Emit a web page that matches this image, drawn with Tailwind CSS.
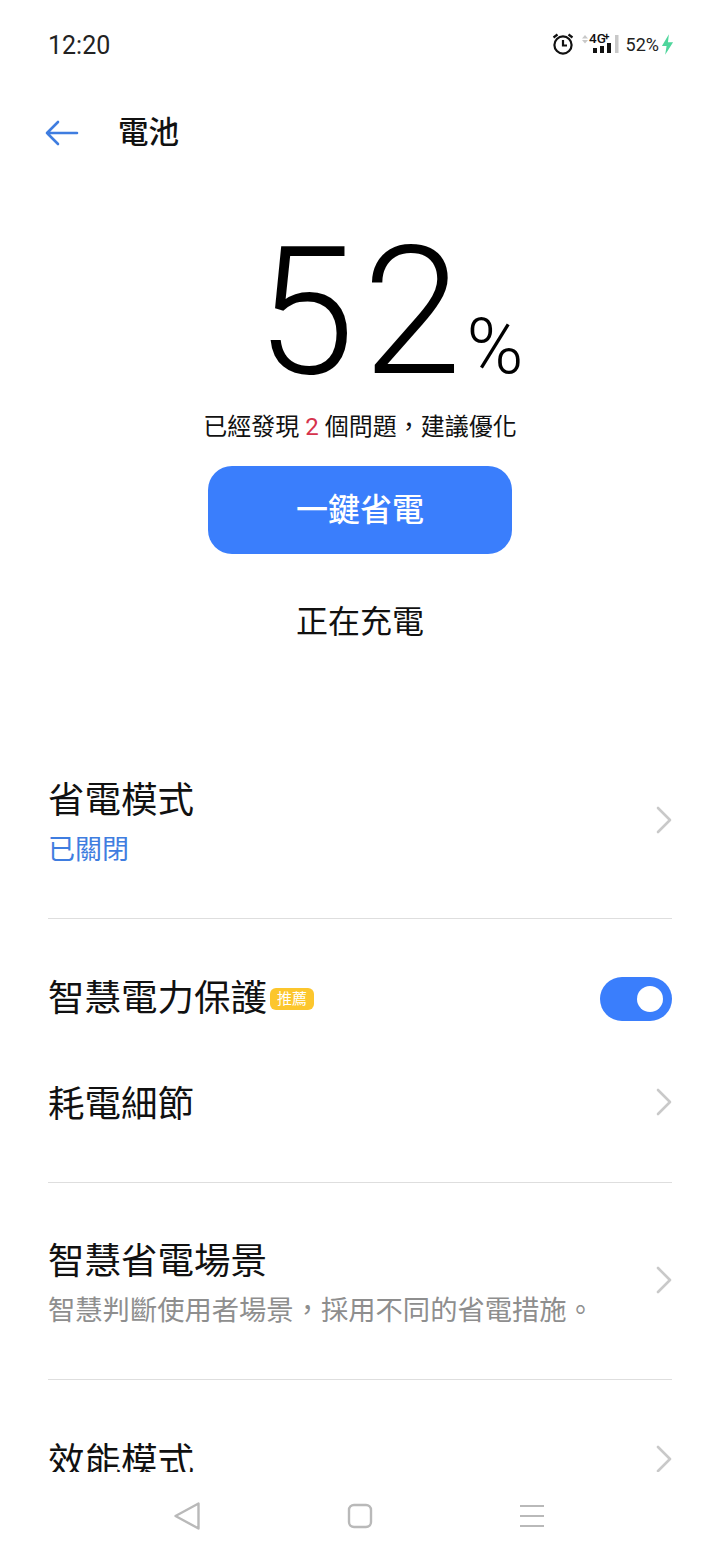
<!DOCTYPE html>
<html lang="zh-Hant">
<head>
<meta charset="utf-8"/>
<meta content="width=device-width, initial-scale=1.0" name="viewport"/>
<title>電池</title>
<script src="https://cdn.jsdelivr.net/npm/@tailwindcss/browser@4"></script>
</head>
<body class="bg-white text-black font-['Roboto','Noto_Sans_CJK_TC',sans-serif]">
<div class="w-[720px] h-[1560px] flex flex-col overflow-hidden bg-white">

  <!-- status bar -->
  <div class="h-[88px] shrink-0 flex items-center justify-between pl-[48px] pr-[46px]">
    <span class="text-[25px] text-[#222] pt-[4px]">12:20</span>
    <div class="flex items-center">
      <svg width="24" height="24" viewBox="0 0 24 24" fill="none" stroke="#111" stroke-width="2.2" class="mr-[7px]">
        <circle cx="12" cy="13" r="8.6"/>
        <path d="M12 8v5.5h4M2.5 5.5l4-3M21.500 5.500l-4-3"/>
      </svg>
      <svg width="37" height="24" viewBox="0 -2 37 24" class="mr-[7px]">
        <path d="M0 4.500l3-3.500 3 3.500zM0 6l3 3.500 3-3.500z" fill="#c8c8c8"/>
        <rect x="11" y="14" width="4" height="5" fill="#111"/>
        <rect x="18" y="12" width="4" height="7" fill="#111"/>
        <rect x="25" y="9" width="4" height="10" fill="#111"/>
        <rect x="33" y="1" width="3.500" height="18" fill="#c8c8c8"/>
        <text x="7" y="9" font-size="13.500" font-weight="500" fill="#111" font-family="Roboto">4G</text>
        <text x="22" y="6" font-size="10" font-weight="700" fill="#111" font-family="Roboto">+</text>
      </svg>
      <span class="text-[18px] text-[#222]">52%</span>
      <svg width="13" height="21" viewBox="0 0 14 22" class="ml-[2px]">
        <path d="M8.500 0L1 12.500h5L4.500 22 13 8.500H7.500z" fill="#4fd69c"/>
      </svg>
    </div>
  </div>

  <!-- header -->
  <div class="h-[90px] shrink-0 flex items-center pl-[45px]">
    <svg width="34" height="26" viewBox="0 0 34 26" fill="none" stroke="#3f7de0" stroke-width="2.600" stroke-linecap="round" stroke-linejoin="round">
      <path d="M32 13H2M13 2L2 13l11 11"/>
    </svg>
    <span class="ml-[39px] text-[30.500px] leading-[40px] font-medium text-[#111]">電池</span>
  </div>

  <!-- battery level -->
  <div class="h-[232px] shrink-0 flex items-end pl-[256px]">
    <span class="text-[178px] leading-[178px] font-light tracking-[8px] mb-[9px]">52</span>
    <span class="text-[77px] leading-[77px] font-light mb-[24px] ml-[-3px]">%</span>
  </div>
  <p class="mt-[-3px] h-[40px] shrink-0 text-center text-[24px] leading-[40px] text-[#111]">已經發現 <span class="text-[#d6334c]">2</span> 個問題，建議優化</p>
  <div class="mt-[19px] flex justify-center shrink-0">
    <button class="w-[304px] h-[88px] rounded-[24px] bg-[#3a7efc] text-white text-[32px] font-medium">一鍵省電</button>
  </div>
  <p class="mt-[46px] h-[44px] shrink-0 text-center text-[32px] leading-[44px] text-[#111]">正在充電</p>

  <!-- settings list -->
  <div class="flex-1 min-h-0 overflow-hidden mt-[79px] mx-[48px]">
    <div class="h-[196px] flex items-center justify-between border-b border-[#dedede]">
      <div class="pt-[11px]">
        <div class="text-[36.500px] leading-[48px] text-[#111]">省電模式</div>
        <div class="text-[27px] leading-[50px] text-[#3f7de0]">已關閉</div>
      </div>
      <svg width="16" height="28" viewBox="0 0 16 28" fill="none" stroke="#c9c9c9" stroke-width="2.600" stroke-linecap="round" stroke-linejoin="round" class="mb-[2px]"><path d="M2 2l12 12L2 26"/></svg>
    </div>
    <div class="pt-[27px] pb-[26px] border-b border-[#dedede]">
      <div class="h-[105px] flex items-center justify-between">
        <div class="flex items-center">
          <span class="text-[36.500px] leading-[48px] text-[#111]">智慧電力保護</span>
          <span class="ml-[3px] w-[44px] h-[22px] rounded-[6px] bg-[#fcc62d] text-white text-[15px] leading-[22px] text-center">推薦</span>
        </div>
        <div class="relative w-[72px] h-[44px] rounded-full bg-[#3a7efc]">
          <div class="absolute right-[9px] top-[9px] w-[26px] h-[26px] rounded-full bg-white"></div>
        </div>
      </div>
      <div class="h-[105px] flex items-center justify-between">
        <span class="text-[36.500px] leading-[48px] text-[#111] pt-[3px]">耗電細節</span>
        <svg width="16" height="28" viewBox="0 0 16 28" fill="none" stroke="#c9c9c9" stroke-width="2.600" stroke-linecap="round" stroke-linejoin="round" class="mb-[4px]"><path d="M2 2l12 12L2 26"/></svg>
      </div>
    </div>
    <div class="h-[197px] flex items-center justify-between border-b border-[#dedede]">
      <div class="pt-[11px]">
        <div class="text-[36.500px] leading-[48px] text-[#111]">智慧省電場景</div>
        <div class="text-[27.300px] leading-[50px] text-[#8e8e8e]">智慧判斷使用者場景，採用不同的省電措施。</div>
      </div>
      <svg width="16" height="28" viewBox="0 0 16 28" fill="none" stroke="#c9c9c9" stroke-width="2.600" stroke-linecap="round" stroke-linejoin="round" class="mb-[2px]"><path d="M2 2l12 12L2 26"/></svg>
    </div>
    <div class="h-[158px] flex items-center justify-between">
      <span class="text-[36.500px] leading-[48px] text-[#111] pt-[5px]">效能模式</span>
      <svg width="16" height="28" viewBox="0 0 16 28" fill="none" stroke="#c9c9c9" stroke-width="2.600" stroke-linecap="round" stroke-linejoin="round"><path d="M2 2l12 12L2 26"/></svg>
    </div>
  </div>

  <!-- nav bar -->
  <div class="h-[88px] shrink-0 bg-white flex items-center justify-between pl-[173px] pr-[176px]">
    <svg width="28" height="30" viewBox="0 0 28 30" fill="none" stroke="#b9b9b9" stroke-width="2.400" stroke-linejoin="round"><path d="M25.500 2.500v25L2.500 15z"/></svg>
    <svg width="26" height="26" viewBox="0 0 26 26" fill="none" stroke="#b9b9b9" stroke-width="2.400" class="mr-[2px]"><rect x="2" y="2" width="22" height="22" rx="5"/></svg>
    <svg width="24" height="24" viewBox="0 0 24 24" fill="none" stroke="#b9b9b9" stroke-width="2"><path d="M0 2h24M0 12h24M0 22h24"/></svg>
  </div>
</div>
</body>
</html>
